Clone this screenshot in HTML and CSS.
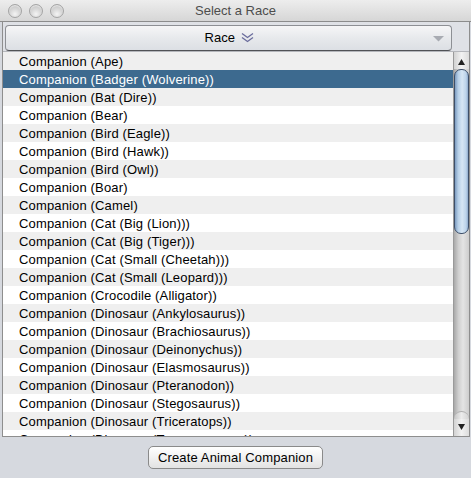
FILE: index.html
```html
<!DOCTYPE html>
<html>
<head>
<meta charset="utf-8">
<title>Select a Race</title>
<link rel="stylesheet" href="styles.css">
</head>
<body>
<div class="window">
  <div class="titlebar">
    <div class="lights">
      <span class="light"></span><span class="light"></span><span class="light"></span>
    </div>
    <div class="title">Select a Race</div>
  </div>
  <div class="frame">
    <div class="header">
      <div class="combo">
        <span class="combo-label">Race
          <svg class="sort" width="13" height="11" viewBox="0 0 13 11"><path d="M1 1.5 L6.5 5.5 L12 1.5 M1 5.5 L6.5 9.5 L12 5.5" fill="none" stroke="#6a6c9c" stroke-width="1.3"/></svg>
        </span>
        <svg class="drop" width="11" height="6" viewBox="0 0 11 6"><path d="M0 0 H11 L5.5 5.5 Z" fill="#a8abb2"/></svg>
      </div>
    </div>
    <div class="body">
      <div class="list">
        <div class="row">Companion (Ape)</div>
        <div class="row selected">Companion (Badger (Wolverine))</div>
        <div class="row">Companion (Bat (Dire))</div>
        <div class="row">Companion (Bear)</div>
        <div class="row">Companion (Bird (Eagle))</div>
        <div class="row">Companion (Bird (Hawk))</div>
        <div class="row">Companion (Bird (Owl))</div>
        <div class="row">Companion (Boar)</div>
        <div class="row">Companion (Camel)</div>
        <div class="row">Companion (Cat (Big (Lion)))</div>
        <div class="row">Companion (Cat (Big (Tiger)))</div>
        <div class="row">Companion (Cat (Small (Cheetah)))</div>
        <div class="row">Companion (Cat (Small (Leopard)))</div>
        <div class="row">Companion (Crocodile (Alligator))</div>
        <div class="row">Companion (Dinosaur (Ankylosaurus))</div>
        <div class="row">Companion (Dinosaur (Brachiosaurus))</div>
        <div class="row">Companion (Dinosaur (Deinonychus))</div>
        <div class="row">Companion (Dinosaur (Elasmosaurus))</div>
        <div class="row">Companion (Dinosaur (Pteranodon))</div>
        <div class="row">Companion (Dinosaur (Stegosaurus))</div>
        <div class="row">Companion (Dinosaur (Triceratops))</div>
        <div class="row">Companion (Dinosaur (Tyrannosaurus))</div>
      </div>
      <div class="scrollbar">
        <div class="arrow up"><svg width="7" height="6" viewBox="0 0 7 6"><path d="M3.5 0 L7 6 H0 Z" fill="#222"/></svg></div>
        <div class="track">
          <div class="thumb"></div>
          <div class="track-fill"></div>
          <div class="track-cap"></div>
        </div>
        <div class="arrow down"><svg width="7" height="6" viewBox="0 0 7 6"><path d="M0 0 H7 L3.5 6 Z" fill="#222"/></svg></div>
      </div>
    </div>
  </div>
  <div class="footer">
    <button class="button">Create Animal Companion</button>
  </div>
</div>
</body>
</html>
```

FILE: styles.css
```css
* { box-sizing: border-box; }
html, body { margin: 0; padding: 0; }
body {
  font-family: "Liberation Sans", Arial, sans-serif;
  font-size: 13px;
  color: #000;
  background: #d6d9df;
}
.window {
  width: 471px;
  height: 478px;
  background: #d6d9df;
  display: flex;
  flex-direction: column;
  overflow: hidden;
}
.titlebar {
  height: 22px;
  flex: none;
  background: linear-gradient(#ededed, #d6d6d6);
  border-bottom: 1px solid #8c8c8c;
  display: flex;
  align-items: center;
  position: relative;
}
.lights {
  display: flex;
  gap: 7px;
  padding-left: 8px;
}
.light {
  width: 14px;
  height: 14px;
  border-radius: 50%;
  border: 1px solid #a4a4a4;
  background: radial-gradient(circle at 50% 75%, #f4f4f4 0%, #d8d8d8 45%, #bdbdbd 100%);
  box-shadow: inset 0 1px 1px rgba(255,255,255,0.6);
}
.title {
  position: absolute;
  left: 0;
  right: 0;
  top: 3px;
  text-align: center;
  color: #4d4d4d;
  font-size: 13px;
}
.frame {
  margin-left: 2px;
  width: 468px;
  border-left: 1px solid #8e8e8e;
  border-right: 1px solid #8e8e8e;
  border-bottom: 1px solid #8e8e8e;
  flex: none;
  background: #dfe1e6;
}
.header {
  height: 30px;
  padding: 3px 0 0 2px;
  border-bottom: 1px solid #b4b6bb;
}
.combo {
  width: 447px;
  height: 26px;
  border: 1px solid #8d8f94;
  border-bottom-color: #505256;
  border-radius: 4px;
  background: linear-gradient(#f6f6f7, #e7e9ec 50%, #dcdfe4);
  display: flex;
  align-items: center;
  position: relative;
}
.combo-label {
  position: absolute;
  left: 0;
  right: 0;
  text-align: center;
  padding-left: 2px;
  line-height: 24px;
}
.sort { vertical-align: -1px; margin-left: 3px; }
.drop { position: absolute; right: 7px; top: 10px; }
.body {
  display: flex;
  height: 384px;
}
.list {
  width: 450px;
  height: 384px;
  overflow: hidden;
  background: #fff;
}
.row {
  height: 18px;
  line-height: 17px;
  padding-top: 1px;
  padding-left: 16px;
  white-space: nowrap;
  background: #fff;
  letter-spacing: 0.15px;
}
.row:nth-child(odd) { background: #efefef; }
.row.selected { background: #3d6a8f; color: #fff; }
.scrollbar {
  width: 16px;
  border-left: 1px solid #9a9a9a;
  display: flex;
  flex-direction: column;
  background: #e6e6e6;
}
.arrow {
  height: 17px;
  flex: none;
  display: flex;
  align-items: center;
  justify-content: center;
  background: linear-gradient(90deg, #d2d2d2, #f2f2f2 50%, #dcdcdc);
}
.arrow.up { padding-top: 2px; }
.arrow.down { height: 17px; padding-bottom: 1px; }
.track {
  flex: 1;
  display: flex;
  flex-direction: column;
  background: linear-gradient(90deg, #a9a9a9, #cfcfcf 30%, #e4e4e4 60%, #cdcdcd);
}
.thumb {
  height: 165px;
  flex: none;
  border: 1px solid #3d4f69;
  border-radius: 7px;
  background: linear-gradient(90deg, #7d9cc0 0%, #b7d0e8 25%, #d6e6f4 55%, #bcd3ea 85%, #8fabcb 100%);
}
.track-fill { flex: 1; }
.track-cap {
  height: 8px;
  flex: none;
  border-radius: 8px 8px 0 0;
  background: linear-gradient(90deg, #c4c4c4, #ececec 50%, #d2d2d2);
  border-top: 1px solid #b0b0b0;
}
.footer {
  flex: 1;
  display: flex;
  justify-content: center;
  padding-top: 9px;
}
.button {
  width: 175px;
  height: 23px;
  font-family: "Liberation Sans", Arial, sans-serif;
  font-size: 13px;
  letter-spacing: 0.15px;
  color: #000;
  border: 1px solid #8a8a8a;
  border-radius: 5px;
  background: linear-gradient(#ffffff, #f1f1f1 50%, #e2e2e2);
  padding: 0;
}
```
